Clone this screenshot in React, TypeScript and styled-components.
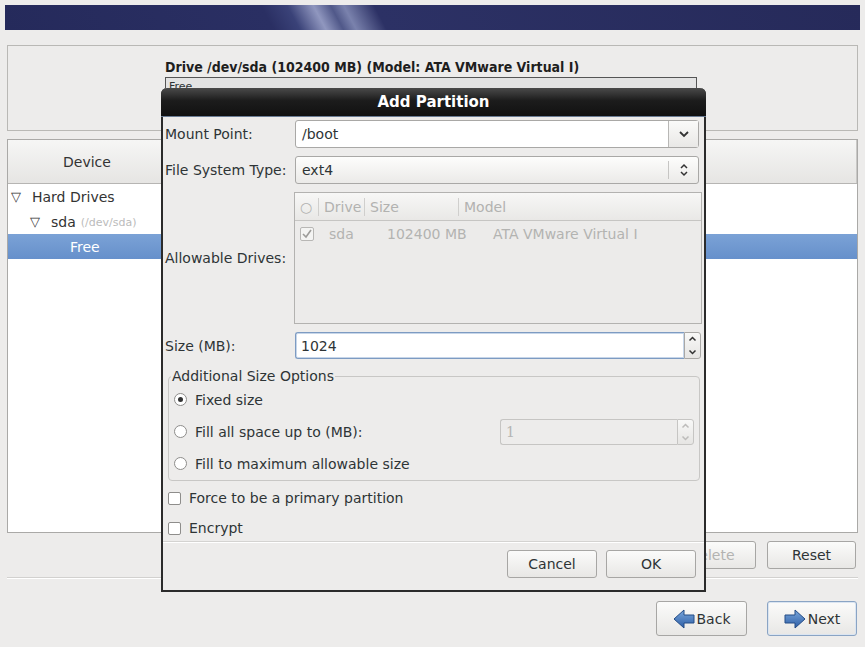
import React from "react";
import styled, { createGlobalStyle } from "styled-components";

const Global = createGlobalStyle`
  html, body { margin: 0; padding: 0; }
  body {
    background: #edeceb;
    font-family: "DejaVu Sans", "Liberation Sans", sans-serif;
    font-size: 14px;
    color: #2e3436;
  }
`;

const Page = styled.div`
  position: relative;
  width: 865px;
  height: 647px;
  padding: 5px 5px 0 5px;
  box-sizing: border-box;
  display: flex;
  flex-direction: column;
  overflow: hidden;
`;

const Banner = styled.div`
  height: 25px;
  background: linear-gradient(62deg, #252a5b 0%, #2a2f63 31%, #3a4278 34%, #9097bf 37%, #505889 39%, #7a82ad 40.5%, #2c3165 44%, #262a5a 100%);
`;

const UpperPanel = styled.div`
  margin: 15px 2px 0 2px;
  height: 86px;
  border: 1px solid #b9b8b5;
  box-sizing: border-box;
  padding: 13px 0 0 157px;
`;

const DriveTitle = styled.div`
  font-family: "DejaVu Sans Condensed", "DejaVu Sans", sans-serif;
  font-stretch: condensed;
  font-weight: bold;
  font-size: 14px;
  color: #1e1e1e;
  line-height: 16px;
`;

const DriveBar = styled.div`
  margin-top: 2px;
  width: 532px;
  height: 20px;
  border: 1px solid #555;
  background: #e3e3e3;
  font-size: 11px;
  padding: 2px 3px;
  box-sizing: border-box;
`;

const LowerPanel = styled.div`
  margin: 8px 2px 0 2px;
  height: 394px;
  border: 1px solid #aaa9a7;
  background: #fff;
  box-sizing: border-box;
`;

const HeaderRow = styled.div`
  display: flex;
  height: 44px;
  box-sizing: border-box;
  border-bottom: 1px solid #b6b5b3;
  background: linear-gradient(#f6f6f5, #e6e5e3);
`;

const HeaderCell = styled.div<{ $w?: number }>`
  width: ${(p) => (p.$w ? `${p.$w}px` : "auto")};
  flex: ${(p) => (p.$w ? "none" : "1")};
  display: flex;
  align-items: center;
  justify-content: center;
  border-right: 1px solid #c9c8c6;
  font-size: 14px;
  color: #333;
`;

const TreeRow = styled.div<{ $indent: number; $selected?: boolean }>`
  height: 25px;
  display: flex;
  align-items: center;
  padding-left: ${(p) => p.$indent}px;
  font-size: 14px;
  color: ${(p) => (p.$selected ? "#fff" : "#333")};
  background: ${(p) => (p.$selected ? "linear-gradient(#7ba2d6, #6690cb)" : "transparent")};
`;

const Expander = styled.span`
  font-size: 13px;
  width: 21px;
  color: #333;
`;

const DimPath = styled.span`
  font-size: 11px;
  color: #bbb;
  margin-left: 5px;
  margin-top: 2px;
`;

const ActionRow = styled.div`
  display: flex;
  justify-content: flex-end;
  gap: 11px;
  margin: 8px 4px 0 0;
`;

const Separator = styled.div`
  margin: 8px 2px 0 2px;
  height: 0;
  border-top: 1px solid #d2d1cf;
  border-bottom: 1px solid #fff;
`;

const NavRow = styled.div`
  display: flex;
  justify-content: flex-end;
  gap: 20px;
  margin: 22px 3px 0 0;
`;

const Button = styled.button<{ $w: number; $h?: number; $focus?: boolean; $disabled?: boolean }>`
  width: ${(p) => p.$w}px;
  height: ${(p) => p.$h ?? 28}px;
  border: 1px solid ${(p) => (p.$focus ? "#8aa4c4" : "#a7a6a4")};
  border-radius: 3px;
  background: linear-gradient(#fbfbfa, #e8e7e5);
  font-family: "DejaVu Sans", sans-serif;
  font-size: 14px;
  color: ${(p) => (p.$disabled ? "#b3b3b1" : "#2e3436")};
  display: flex;
  align-items: center;
  justify-content: center;
  gap: 2px;
  padding: 0;
  box-shadow: ${(p) => (p.$focus ? "0 0 0 1px #dbe5f1 inset" : "none")};
`;

/* dialog */

const Dialog = styled.div`
  position: absolute;
  left: 161px;
  top: 88px;
  width: 545px;
  height: 504px;
  box-sizing: border-box;
  border: 2px solid #2b2b2b;
  border-top: none;
  border-radius: 6px 6px 0 0;
  background: #edeceb;
  display: flex;
  flex-direction: column;
`;

const TitleBar = styled.div`
  height: 28px;
  margin: 0 -2px;
  border-radius: 6px 6px 0 0;
  background: linear-gradient(#4a4a4a, #1c1c1c 45%, #111 100%);
  border-bottom: 1px solid #6b7d95;
  color: #fff;
  font-weight: bold;
  font-size: 15px;
  display: flex;
  align-items: center;
  justify-content: center;
`;

const Form = styled.div`
  display: grid;
  grid-template-columns: 130px 1fr;
  align-items: center;
  row-gap: 8px;
  padding: 3px 4px 0 2px;
`;

const Label = styled.div`
  font-size: 14px;
  color: #2e3436;
`;

const Combo = styled.div<{ $entry?: boolean }>`
  height: 28px;
  box-sizing: border-box;
  border: 1px solid #a9a8a6;
  border-radius: 3px;
  display: flex;
  align-items: stretch;
  background: ${(p) => (p.$entry ? "#fff" : "linear-gradient(#fdfdfc, #ebeae8)")};
  margin-right: 1px;
`;

const ComboText = styled.div`
  flex: 1;
  display: flex;
  align-items: center;
  padding-left: 6px;
  font-size: 14px;
`;

const ComboArrow = styled.div<{ $sep?: boolean }>`
  width: 29px;
  display: flex;
  align-items: center;
  justify-content: center;
  border-left: 1px solid ${(p) => (p.$sep ? "#c6c5c3" : "#b8b7b5")};
  background: ${(p) => (p.$sep ? "transparent" : "linear-gradient(#fafaf9, #e9e8e6)")};
  margin: ${(p) => (p.$sep ? "4px 0" : "0")};
`;

const DriveList = styled.div`
  height: 132px;
  border: 1px solid #b3b2b0;
  box-sizing: border-box;
  margin-right: -2px;
  margin-left: -1px;
  background: #ecebea;
`;

const ListHead = styled.div`
  display: flex;
  height: 27px;
  border-bottom: 1px solid #c6c5c3;
  background: linear-gradient(#f7f7f6, #e9e8e6);
  align-items: center;
`;

const ListHeadCell = styled.div<{ $w?: number; $last?: boolean }>`
  width: ${(p) => (p.$w ? `${p.$w}px` : "auto")};
  flex: ${(p) => (p.$w ? "none" : "1")};
  color: #b2b2b0;
  font-size: 14px;
  padding-left: 5px;
  box-sizing: border-box;
  border-right: ${(p) => (p.$last ? "none" : "1px solid #d0cfcd")};
  height: 18px;
  display: flex;
  align-items: center;
`;

const ListRow = styled.div`
  display: flex;
  align-items: center;
  height: 26px;
  color: #b3b3b1;
  font-size: 14px;
`;

const ListCell = styled.div<{ $w?: number }>`
  width: ${(p) => (p.$w ? `${p.$w}px` : "auto")};
  flex: ${(p) => (p.$w ? "none" : "1")};
  padding-left: 5px;
  box-sizing: border-box;
  display: flex;
  align-items: center;
`;

const SizeEntry = styled.div`
  height: 27px;
  display: flex;
  margin-right: -1px;
`;

const EntryField = styled.div`
  flex: 1;
  border: 1px solid #7d9bc2;
  border-right: none;
  border-radius: 3px 0 0 3px;
  background: #fff;
  box-shadow: 0 0 0 1px #c7d6e9 inset;
  display: flex;
  align-items: center;
  padding-left: 5px;
  font-size: 14px;
`;

const SpinButtons = styled.div<{ $disabled?: boolean }>`
  width: 15px;
  border: 1px solid ${(p) => (p.$disabled ? "#c6c5c3" : "#a9a8a6")};
  border-radius: 0 3px 3px 0;
  background: linear-gradient(#f8f8f7, #e6e5e3);
  display: flex;
  flex-direction: column;
  align-items: center;
  justify-content: space-around;
`;

const Fieldset = styled.fieldset`
  margin: 9px 4px 0 5px;
  padding: 3px 0 4px 5px;
  border: 1px solid #c8c7c5;
  border-radius: 4px;
  display: flex;
  flex-direction: column;
  gap: 7px;
`;

const Legend = styled.legend`
  font-size: 14px;
  padding: 0 1px;
  margin-left: -3px;
  color: #2e3436;
`;

const OptionRow = styled.div<{ $h?: number }>`
  display: flex;
  align-items: center;
  height: ${(p) => p.$h ?? 25}px;
  font-size: 14px;
`;

const Radio = styled.span<{ $on?: boolean }>`
  width: 11px;
  height: 11px;
  border: 1px solid #8e8d8b;
  border-radius: 50%;
  background: #fff;
  margin-right: 8px;
  display: flex;
  align-items: center;
  justify-content: center;
  &::after {
    content: "";
    display: ${(p) => (p.$on ? "block" : "none")};
    width: 5px;
    height: 5px;
    border-radius: 50%;
    background: #333;
  }
`;

const Check = styled.span`
  width: 11px;
  height: 11px;
  border: 1px solid #8e8d8b;
  border-radius: 2px;
  background: #fff;
  margin-right: 8px;
`;

const FillSpin = styled.div`
  margin-left: auto;
  margin-right: 5px;
  width: 194px;
  height: 26px;
  display: flex;
`;

const FillField = styled.div`
  flex: 1;
  border: 1px solid #c6c5c3;
  border-right: none;
  border-radius: 3px 0 0 3px;
  display: flex;
  align-items: center;
  padding-left: 5px;
  color: #b5b5b3;
  font-family: "DejaVu Serif", serif;
  font-size: 14px;
`;

const CheckList = styled.div`
  display: flex;
  flex-direction: column;
  gap: 8px;
  padding: 6px 0 0 5px;
`;

const DialogSep = styled.div`
  margin-top: 2px;
  border-top: 1px solid #d4d3d1;
  border-bottom: 1px solid #fff;
`;

const DialogButtons = styled.div`
  display: flex;
  justify-content: flex-end;
  gap: 9px;
  padding: 7px 8px 0 0;
`;

const ArrowIcon = ({ dir }: { dir: "left" | "right" }) => (
  <svg width="22" height="20" viewBox="0 0 22 20">
    <defs>
      <linearGradient id={`ag-${dir}`} x1="0" y1="0" x2="0" y2="1">
        <stop offset="0" stopColor="#7aa7dc" />
        <stop offset="1" stopColor="#2c5da5" />
      </linearGradient>
    </defs>
    <path
      d={dir === "left" ? "M1 10 L11 1 L11 6 L21 6 L21 14 L11 14 L11 19 Z" : "M21 10 L11 1 L11 6 L1 6 L1 14 L11 14 L11 19 Z"}
      fill={`url(#ag-${dir})`}
      stroke="#244c86"
      strokeWidth="1"
      strokeLinejoin="round"
    />
  </svg>
);

const Chevron = () => (
  <svg width="12" height="8" viewBox="0 0 12 8">
    <path d="M2 2 L6 6 L10 2" fill="none" stroke="#333" strokeWidth="1.8" />
  </svg>
);

const UpDown = () => (
  <svg width="10" height="14" viewBox="0 0 10 14">
    <path d="M2 5 L5 2 L8 5 M2 9 L5 12 L8 9" fill="none" stroke="#333" strokeWidth="1.5" />
  </svg>
);

const SmallChevron = ({ up, color }: { up?: boolean; color: string }) => (
  <svg width="9" height="6" viewBox="0 0 9 6">
    <path d={up ? "M1.5 4.5 L4.5 1.5 L7.5 4.5" : "M1.5 1.5 L4.5 4.5 L7.5 1.5"} fill="none" stroke={color} strokeWidth="1.5" />
  </svg>
);

export default function App() {
  return (
    <>
      <Global />
      <Page>
        <Banner />
        <UpperPanel>
          <DriveTitle>Drive /dev/sda (102400 MB) (Model: ATA VMware Virtual I)</DriveTitle>
          <DriveBar>Free</DriveBar>
        </UpperPanel>
        <LowerPanel>
          <HeaderRow>
            <HeaderCell $w={158}>Device</HeaderCell>
            <HeaderCell />
          </HeaderRow>
          <TreeRow $indent={3}>
            <Expander>▽</Expander>Hard Drives
          </TreeRow>
          <TreeRow $indent={22}>
            <Expander>▽</Expander>sda<DimPath>(/dev/sda)</DimPath>
          </TreeRow>
          <TreeRow $indent={62} $selected>
            Free
          </TreeRow>
        </LowerPanel>
        <ActionRow>
          <Button $w={89} $disabled>Delete</Button>
          <Button $w={89}>Reset</Button>
        </ActionRow>
        <Separator />
        <NavRow>
          <Button $w={91} $h={35}>
            <ArrowIcon dir="left" />
            Back
          </Button>
          <Button $w={90} $h={35} $focus>
            <ArrowIcon dir="right" />
            Next
          </Button>
        </NavRow>

        <Dialog>
          <TitleBar>Add Partition</TitleBar>
          <Form>
            <Label>Mount Point:</Label>
            <Combo $entry>
              <ComboText>/boot</ComboText>
              <ComboArrow>
                <Chevron />
              </ComboArrow>
            </Combo>
            <Label>File System Type:</Label>
            <Combo>
              <ComboText>ext4</ComboText>
              <ComboArrow $sep>
                <UpDown />
              </ComboArrow>
            </Combo>
            <Label>Allowable Drives:</Label>
            <DriveList>
              <ListHead>
                <ListHeadCell $w={24}>○</ListHeadCell>
                <ListHeadCell $w={46}>Drive</ListHeadCell>
                <ListHeadCell $w={94}>Size</ListHeadCell>
                <ListHeadCell $last>Model</ListHeadCell>
              </ListHead>
              <ListRow>
                <ListCell $w={29}>
                  <svg width="14" height="14" viewBox="0 0 14 14">
                    <rect x="0.5" y="0.5" width="13" height="13" rx="1.5" fill="#f4f4f3" stroke="#b8b7b5" />
                    <path d="M3 7 L6 10 L11 3" fill="none" stroke="#9d9c9a" strokeWidth="1.6" />
                  </svg>
                </ListCell>
                <ListCell $w={58}>sda</ListCell>
                <ListCell $w={106}>102400 MB</ListCell>
                <ListCell>ATA VMware Virtual I</ListCell>
              </ListRow>
            </DriveList>
            <Label>Size (MB):</Label>
            <SizeEntry>
              <EntryField>1024</EntryField>
              <SpinButtons>
                <SmallChevron up color="#333" />
                <SmallChevron color="#333" />
              </SpinButtons>
            </SizeEntry>
          </Form>
          <Fieldset>
            <Legend>Additional Size Options</Legend>
            <OptionRow>
              <Radio $on />
              Fixed size
            </OptionRow>
            <OptionRow>
              <Radio />
              Fill all space up to (MB):
              <FillSpin>
                <FillField>1</FillField>
                <SpinButtons $disabled>
                  <SmallChevron up color="#bdbcba" />
                  <SmallChevron color="#bdbcba" />
                </SpinButtons>
              </FillSpin>
            </OptionRow>
            <OptionRow>
              <Radio />
              Fill to maximum allowable size
            </OptionRow>
          </Fieldset>
          <CheckList>
            <OptionRow $h={22}>
              <Check />
              Force to be a primary partition
            </OptionRow>
            <OptionRow $h={22}>
              <Check />
              Encrypt
            </OptionRow>
          </CheckList>
          <DialogSep />
          <DialogButtons>
            <Button $w={90}>Cancel</Button>
            <Button $w={90}>OK</Button>
          </DialogButtons>
        </Dialog>
      </Page>
    </>
  );
}
